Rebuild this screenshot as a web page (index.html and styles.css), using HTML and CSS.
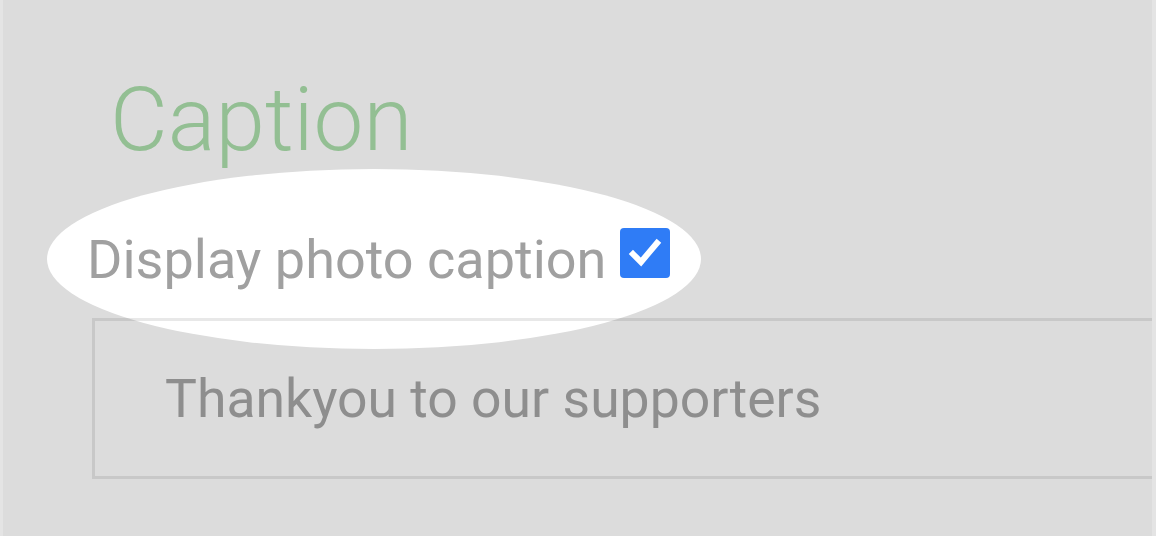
FILE: index.html
```html
<!DOCTYPE html>
<html lang="en">
<head>
    <meta charset="UTF-8">
    <title>Caption</title>
    <link rel="stylesheet" href="styles.css">
</head>
<body>
    <div class="page">
        <h1 class="title">Caption</h1>
        <div class="check-row">
            <label for="show_caption">Display photo caption</label><span class="box" id="show_caption"><svg viewBox="0 0 50 50" width="50" height="50"><path d="M13 26 L21 34 L37 15" fill="none" stroke="#fff" stroke-width="6" stroke-linecap="square"/></svg></span>
        </div>
        <div class="field">Thankyou to our supporters</div>
    </div>
</body>
</html>
```

FILE: styles.css
```css
html, body {margin: 0; padding: 0; height: 100%;}
body {background: #e4e4e4; font-family: Roboto, "Liberation Sans", sans-serif;}
.page {position: relative; z-index: 0; margin: 0 4px 0 3px; height: 536px; background: #dcdcdc; overflow: hidden;}
.title {margin: 0; padding: 76px 0 0 107px; font-size: 89px; line-height: 88px; font-weight: 300; color: #93bf93;}
.check-row {position: relative; margin-top: 64px; padding-left: 84px; font-size: 54px; line-height: 60px; color: #a0a0a0;}
.check-row::before {content: ""; position: absolute; z-index: -1; left: 44px; top: -59px; width: 654px; height: 180px; border-radius: 50%; background: #fff;}
.check-row .box {display: inline-block; width: 50px; height: 50px; margin-left: 14px; background: #2f7cf6; border-radius: 4px;}
.check-row .box svg {display: block;}
.field {display: flex; align-items: center; margin: 28px -20px 0 89px; height: 155px; padding-left: 70px; border: 3px solid rgba(0, 0, 0, 0.09); font-size: 53.5px; color: #8e8e8e;}
```
